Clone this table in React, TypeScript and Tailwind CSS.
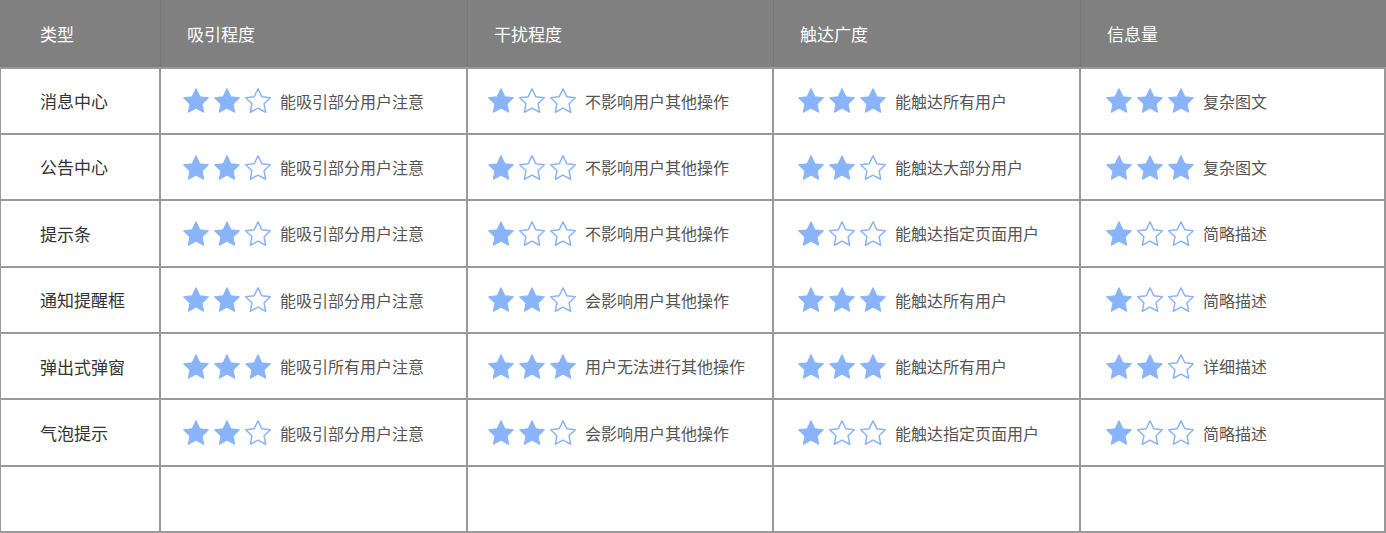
const rows: { name: string; cells: [number, string][] }[] = [
  { name: '消息中心', cells: [[2, '能吸引部分用户注意'], [1, '不影响用户其他操作'], [3, '能触达所有用户'], [3, '复杂图文']] },
  { name: '公告中心', cells: [[2, '能吸引部分用户注意'], [1, '不影响用户其他操作'], [2, '能触达大部分用户'], [3, '复杂图文']] },
  { name: '提示条', cells: [[2, '能吸引部分用户注意'], [1, '不影响用户其他操作'], [1, '能触达指定页面用户'], [1, '简略描述']] },
  { name: '通知提醒框', cells: [[2, '能吸引部分用户注意'], [2, '会影响用户其他操作'], [3, '能触达所有用户'], [1, '简略描述']] },
  { name: '弹出式弹窗', cells: [[3, '能吸引所有用户注意'], [3, '用户无法进行其他操作'], [3, '能触达所有用户'], [2, '详细描述']] },
  { name: '气泡提示', cells: [[2, '能吸引部分用户注意'], [2, '会影响用户其他操作'], [1, '能触达指定页面用户'], [1, '简略描述']] },
]

const headers = ['吸引程度', '干扰程度', '触达广度', '信息量']

// left padding of each rating column, measured per column
const pads = ['pl-[22px]', 'pl-[20px]', 'pl-[24px]', 'pl-[25px]']

function Star({ filled }: { filled: boolean }) {
  return (
    <svg width="26" height="25" viewBox="2.2 2 19.6 18.8">
      <path
        d="M12 2.6l2.85 5.9 6.45.85-4.72 4.5 1.2 6.4L12 17.1l-5.78 3.15 1.2-6.4-4.72-4.5 6.45-.85z"
        fill={filled ? '#8ab4fa' : 'white'}
        stroke="#8ab4fa"
        strokeWidth={filled ? 0.8 : 1.1}
        strokeLinejoin="round"
      />
    </svg>
  )
}

export default function App() {
  return (
    <div className="w-[1386px] h-[533px] bg-white overflow-hidden font-['Noto_Sans_CJK_SC',sans-serif]">
      <div className="grid grid-cols-[161px_307px_306px_307px_305px] grid-rows-[66.5px_repeat(7,66.4px)] border-r-2 border-b-2 border-[#999]">
        {/* Header */}
        <div className="bg-[#808080] border-r border-[#777] flex items-center pl-[40px] text-white text-[17px]">
          类型
        </div>
        {headers.map((h, i) => (
          <div
            key={h}
            className={`bg-[#808080] flex items-center pl-[26px] text-white text-[17px] ${i < 3 ? 'border-r border-[#777]' : ''}`}
          >
            {h}
          </div>
        ))}

        {/* Body */}
        {rows.map((r) => (
          <div key={r.name} className="contents">
            <div className="border-l border-t-2 border-r-2 border-[#999] flex items-center pl-[39px] text-[17px] text-[#333]">
              {r.name}
            </div>
            {r.cells.map(([n, t], i) => (
              <div
                key={i}
                className={`border-t-2 border-[#999] flex items-center gap-[9px] ${pads[i]} ${i < 3 ? 'border-r-2' : ''}`}
              >
                <div className="flex gap-[5px]">
                  {[0, 1, 2].map((k) => (
                    <Star key={k} filled={k < n} />
                  ))}
                </div>
                <span className="text-[16px] text-[#555]">{t}</span>
              </div>
            ))}
          </div>
        ))}

        {/* Empty last row */}
        <div className="border-l border-t-2 border-r-2 border-[#999]" />
        <div className="border-t-2 border-r-2 border-[#999]" />
        <div className="border-t-2 border-r-2 border-[#999]" />
        <div className="border-t-2 border-r-2 border-[#999]" />
        <div className="border-t-2 border-[#999]" />
      </div>
    </div>
  )
}
